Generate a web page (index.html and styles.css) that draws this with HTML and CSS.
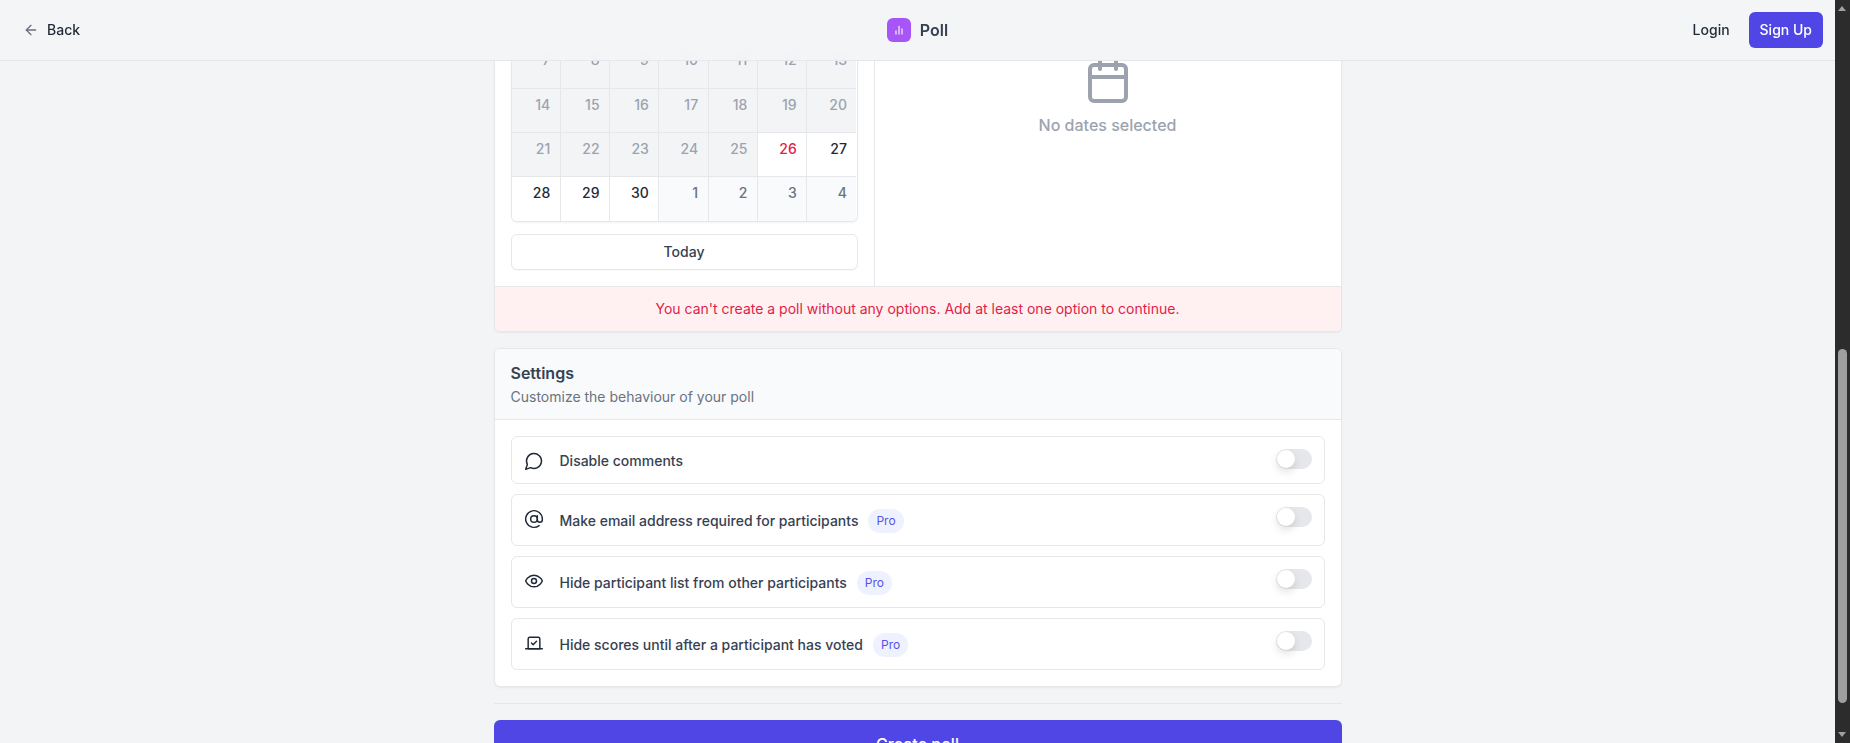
FILE: index.html
```html
<!DOCTYPE html>
<html lang="en">
<head>
  <meta charset="UTF-8">
  <title>New Poll</title>
  <meta name="viewport" content="width=device-width, initial-scale=1">
  <link rel="stylesheet" href="styles.css">
</head>
<body>

<div class="page">
  <header class="topbar">
    <a class="back-link">
      <svg class="back-icon" viewBox="0 0 24 24"><path d="m12 19-7-7 7-7"/><path d="M19 12H5"/></svg>
      Back
    </a>
    <div class="brand">
      <span class="brand-logo">
        <svg viewBox="0 0 24 24"><path d="M6 20v-6"/><path d="M12 20V5"/><path d="M18 20V10"/></svg>
      </span>
      Poll
    </div>
    <div class="auth">
      <a class="login">Login</a>
      <a class="signup">Sign Up</a>
    </div>
  </header>

  <main class="content">
    <section class="card">
      <div class="date-picker">
        <div class="calendar-side">
          <div class="calendar">
            <div class="day past">7</div><div class="day past">8</div><div class="day past">9</div><div class="day past">10</div><div class="day past">11</div><div class="day past">12</div><div class="day past">13</div>
            <div class="day past">14</div><div class="day past">15</div><div class="day past">16</div><div class="day past">17</div><div class="day past">18</div><div class="day past">19</div><div class="day past">20</div>
            <div class="day past">21</div><div class="day past">22</div><div class="day past">23</div><div class="day past">24</div><div class="day past">25</div><div class="day today">26</div><div class="day">27</div>
            <div class="day">28</div><div class="day">29</div><div class="day">30</div><div class="day next">1</div><div class="day next">2</div><div class="day next">3</div><div class="day next">4</div>
          </div>
          <button class="today-btn">Today</button>
        </div>
        <div class="dates-side">
          <svg class="empty-icon" viewBox="0 0 24 24"><path d="M8 2v4"/><path d="M16 2v4"/><rect x="3" y="4" width="18" height="18" rx="2"/><path d="M3 10h18"/></svg>
          <div class="empty-text">No dates selected</div>
        </div>
      </div>
      <div class="error-bar">You can't create a poll without any options. Add at least one option to continue.</div>
    </section>

    <section class="card settings">
      <div class="settings-head">
        <h2>Settings</h2>
        <p>Customize the behaviour of your poll</p>
      </div>
      <div class="settings-list">
        <div class="setting">
          <svg class="setting-icon" viewBox="0 0 24 24"><path d="M7.9 20A9 9 0 1 0 4 16.1L2 22Z"/></svg>
          <div class="setting-label">Disable comments</div>
          <span class="toggle"></span>
        </div>
        <div class="setting">
          <svg class="setting-icon" viewBox="0 0 24 24"><circle cx="12" cy="12" r="4"/><path d="M16 8v5a3 3 0 0 0 6 0v-1a10 10 0 1 0-3.92 7.94"/></svg>
          <div class="setting-label with-badge">Make email address required for participants <span class="pro">Pro</span></div>
          <span class="toggle"></span>
        </div>
        <div class="setting">
          <svg class="setting-icon" viewBox="0 0 24 24"><path d="M2 12s3-7 10-7 10 7 10 7-3 7-10 7-10-7-10-7Z"/><circle cx="12" cy="12" r="3"/></svg>
          <div class="setting-label with-badge">Hide participant list from other participants <span class="pro">Pro</span></div>
          <span class="toggle"></span>
        </div>
        <div class="setting">
          <svg class="setting-icon" viewBox="0 0 24 24"><path d="m9 12 2 2 4-4"/><path d="M5 7c0-1.1.9-2 2-2h10a2 2 0 0 1 2 2v12H5V7Z"/><path d="M22 19H2"/></svg>
          <div class="setting-label with-badge">Hide scores until after a participant has voted <span class="pro">Pro</span></div>
          <span class="toggle"></span>
        </div>
      </div>
    </section>

    <hr class="divider">
    <button class="create-btn">Create poll</button>
  </main>
</div>

<div class="scrollbar">
  <span class="arrow-up"></span>
  <span class="thumb"></span>
  <span class="arrow-down"></span>
</div>

</body>
</html>
```

FILE: styles.css
```css
* {
  box-sizing: border-box;
  margin: 0;
  padding: 0;
}

html, body {
  height: 100%;
  overflow: hidden;
}

body {
  font-family: Inter, 'Liberation Sans', sans-serif;
  font-size: 14px;
  line-height: 20px;
  color: #1f2937;
  background: #f3f4f6;
  display: flex;
}

svg {
  fill: none;
  stroke: currentColor;
  stroke-width: 2;
  stroke-linecap: round;
  stroke-linejoin: round;
  flex-shrink: 0;
}

.page {
  position: relative;
  flex: 1;
  height: 100%;
  overflow: hidden;
}

/* header floats over the scrolled content */
.topbar {
  position: absolute;
  top: 0;
  left: 0;
  right: 0;
  height: 61px;
  padding: 0 12px;
  display: grid;
  grid-template-columns: 1fr auto 1fr;
  align-items: center;
  background: rgba(243, 244, 246, 0.95);
  backdrop-filter: blur(4px);
  border-bottom: 1px solid #e5e7eb;
  z-index: 10;
}

.back-link {
  display: flex;
  align-items: center;
  gap: 8px;
  padding: 0 11px;
  font-weight: 500;
  color: #1f2937;
}

.back-icon {
  width: 16px;
  height: 16px;
  color: #6b7280;
}

.brand {
  display: flex;
  align-items: center;
  gap: 9px;
  font-size: 16px;
  font-weight: 600;
  color: #374151;
}

.brand-logo {
  width: 24px;
  height: 24px;
  border-radius: 6px;
  background: #a855f7;
  color: #e9d5ff;
  display: flex;
  align-items: center;
  justify-content: center;
}

.brand-logo svg {
  width: 12px;
  height: 12px;
  stroke-width: 3;
}

.auth {
  display: flex;
  align-items: center;
  justify-content: flex-end;
  gap: 19px;
  font-weight: 500;
}

.signup {
  height: 36px;
  line-height: 36px;
  padding: 0 11px;
  border-radius: 6px;
  background: #4f46e5;
  color: white;
}

.content {
  width: 848px;
  margin: 0 auto;
  padding-top: 43.4px;
}

.card {
  background: white;
  border: 1px solid #e5e7eb;
  border-radius: 6px;
  box-shadow: 0 1px 2px rgba(0, 0, 0, 0.05);
  overflow: hidden;
  margin-bottom: 16px;
}

.date-picker {
  display: flex;
}

.calendar-side {
  width: 380px;
  padding: 0 16px 16px;
  border-right: 1px solid #e5e7eb;
}

.calendar {
  display: grid;
  grid-template-columns: repeat(7, 1fr);
  border: 1px solid #e5e7eb;
  border-top: none;
  border-radius: 0 0 6px 6px;
  box-shadow: 0 1px 2px rgba(0, 0, 0, 0.05);
  overflow: hidden;
}

.day {
  height: 44.2px;
  padding: 6px 9.5px 0 0;
  text-align: right;
  font-weight: 500;
  background: white;
  border-right: 1px solid #e5e7eb;
  border-bottom: 1px solid #e5e7eb;
}

.day:nth-child(7n) {
  border-right: none;
}

.day:nth-last-child(-n+7) {
  border-bottom: none;
}

.day.past {
  background: #f3f4f6;
  color: #9ca3af;
}

.day.today {
  color: #e11d48;
}

.day.next {
  background: #f9fafb;
  color: #6b7280;
}

.today-btn {
  display: block;
  width: 100%;
  height: 36px;
  margin-top: 12px;
  font-family: inherit;
  font-size: 14px;
  font-weight: 500;
  color: #374151;
  background: white;
  border: 1px solid #e5e7eb;
  border-radius: 6px;
  padding-bottom: 2px;
  box-shadow: 0 1px 1px rgba(0, 0, 0, 0.03);
}

.dates-side {
  flex: 1;
  display: flex;
  flex-direction: column;
  align-items: center;
  padding-top: 13px;
}

.empty-icon {
  width: 48px;
  height: 48px;
  color: #9ca3af;
}

.empty-text {
  margin-top: 8px;
  font-size: 16px;
  line-height: 24px;
  font-weight: 500;
  color: #9ca3af;
}

.error-bar {
  height: 45px;
  line-height: 44px;
  text-align: center;
  color: #e11d48;
  background: #fff1f2;
  border-top: 1px solid #e5e7eb;
}

.settings-head {
  height: 71px;
  padding: 12px 16px 0;
  background: #f9fafb;
  border-bottom: 1px solid #e5e7eb;
}

.settings-head h2 {
  font-size: 16px;
  line-height: 24px;
  font-weight: 600;
  color: #374151;
}

.settings-head p {
  margin-top: 2px;
  color: #6b7280;
}

.settings-list {
  padding: 16px;
  display: flex;
  flex-direction: column;
  gap: 10px;
}

.setting {
  display: flex;
  align-items: flex-start;
  gap: 16px;
  padding: 12px;
  border: 1px solid #e5e7eb;
  border-radius: 6px;
}

.setting-icon {
  width: 20px;
  height: 20px;
  margin-top: 2px;
  color: #1f2937;
  stroke-width: 1.75;
}

.setting-label {
  flex: 1;
  display: flex;
  align-items: center;
  gap: 10px;
  min-height: 22px;
  padding-top: 1px;
  font-weight: 500;
  color: #374151;
}

.setting-label.with-badge {
  padding-top: 2px;
}

.pro {
  height: 24px;
  line-height: 24px;
  padding: 0 8px;
  border-radius: 12px;
  font-size: 12px;
  font-weight: 400;
  color: #5850ec;
  background: #eef2ff;
}

.toggle {
  position: relative;
  width: 36px;
  height: 20px;
  border-radius: 10px;
  background: #e5e7eb;
}

.toggle::after {
  content: "";
  position: absolute;
  top: 1px;
  left: 1px;
  width: 18px;
  height: 18px;
  border-radius: 50%;
  background: white;
  box-shadow: 0 4px 8px rgba(0, 0, 0, 0.12);
}

.divider {
  border: none;
  border-top: 1px solid #e5e7eb;
  margin-bottom: 16px;
}

.create-btn {
  display: block;
  width: 100%;
  height: 48px;
  font-family: inherit;
  font-size: 16px;
  font-weight: 500;
  color: white;
  background: #4f46e5;
  border: none;
  border-radius: 6px;
}

.scrollbar {
  position: relative;
  width: 15px;
  height: 100%;
  background: #2c2c2c;
  flex-shrink: 0;
}

.thumb {
  position: absolute;
  top: 349px;
  left: 3px;
  width: 9px;
  height: 354px;
  border-radius: 5px;
  background: #9f9f9f;
}

.arrow-up, .arrow-down {
  position: absolute;
  left: 3px;
  border-left: 4.5px solid transparent;
  border-right: 4.5px solid transparent;
}

.arrow-up {
  top: 6px;
  border-bottom: 5px solid #a0a0a0;
}

.arrow-down {
  bottom: 6px;
  border-top: 5px solid #a0a0a0;
}
```
